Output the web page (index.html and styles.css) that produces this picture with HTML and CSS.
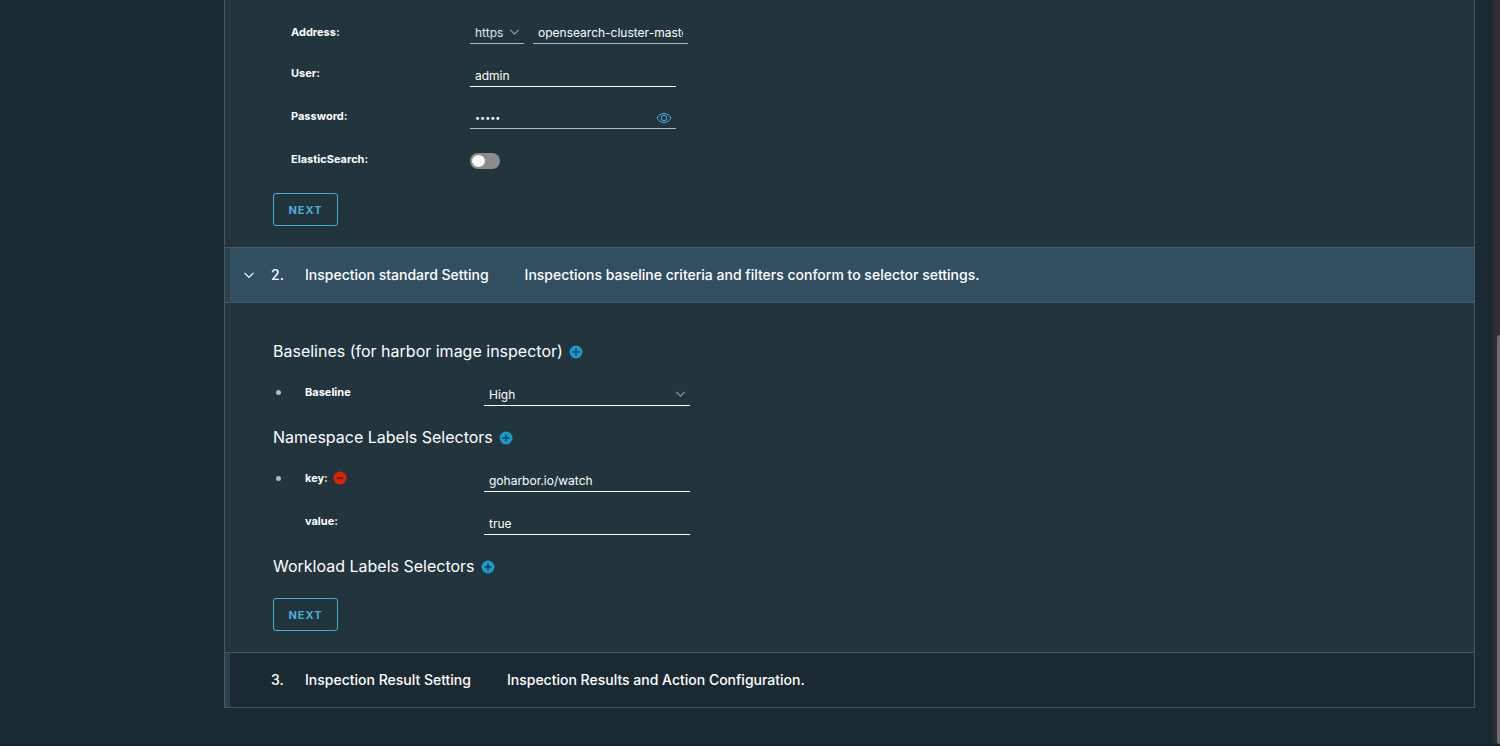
FILE: index.html
```html
<!DOCTYPE html>
<html lang="en">
<head>
<meta charset="utf-8">
<title>Inspection settings</title>
<link rel="stylesheet" href="styles.css">
</head>
<body>
<svg class="symbols" aria-hidden="true">
  <symbol id="chevron" viewBox="0 0 12 12"><path d="M1.5 3.8 6 8.3l4.500-4.500" fill="none" stroke="currentColor" stroke-width="1.200"/></symbol>
  <symbol id="plus" viewBox="0 0 14 14"><circle cx="7" cy="7" r="6.500" fill="#179bd3"/><path d="M7 3.800v6.400M3.800 7h6.400" stroke="#22343c" stroke-width="1.300" stroke-linecap="round"/></symbol>
  <symbol id="minus" viewBox="0 0 14 14"><circle cx="7" cy="7" r="6.500" fill="#e12200"/><path d="M4.200 7h5.600" stroke="#22343c" stroke-width="1.500" stroke-linecap="round"/></symbol>
  <symbol id="eye" viewBox="0 0 16 12"><path d="M1 6c1.600-2.900 4.100-4.500 7-4.500S13.400 3.100 15 6c-1.600 2.900-4.100 4.500-7 4.500S2.600 8.900 1 6z" fill="none" stroke="currentColor"/><circle cx="8" cy="6" r="2.800" fill="none" stroke="currentColor"/></symbol>
</svg>
<div class="page">
  <main class="content">
    <form class="accordion">
      <section class="panel panel-first">
        <div class="fields">
          <div class="row">
            <label class="label" for="host">Address:</label>
            <div class="control pair">
              <span class="select select-scheme"><select class="field muted" id="scheme" aria-label="Scheme"><option>https</option></select><svg class="chevron"><use href="#chevron"/></svg></span>
              <input class="field field-host muted" id="host" value="opensearch-cluster-master">
            </div>
          </div>
          <div class="row">
            <label class="label" for="user">User:</label>
            <div class="control lowered"><input class="field" id="user" value="admin"></div>
          </div>
          <div class="row row-tall">
            <label class="label" for="password">Password:</label>
            <div class="control password">
              <input class="field field-secret muted" id="password" type="password" value="admin">
              <button class="icon-button reveal" type="button" aria-label="Show password"><svg class="eye"><use href="#eye"/></svg></button>
            </div>
          </div>
          <div class="row row-tall">
            <label class="label" for="elastic">ElasticSearch:</label>
            <div class="control toggle-box"><input class="toggle" id="elastic" type="checkbox"></div>
          </div>
        </div>
        <button class="next" type="button">NEXT</button>
      </section>

      <button class="step step-open" type="button" aria-expanded="true">
        <svg class="step-arrow"><use href="#chevron"/></svg>
        <span class="step-number">2.</span>
        <span class="step-title">Inspection standard Setting</span>
        <span>Inspections baseline criteria and filters conform to selector settings.</span>
      </button>
      <section class="panel panel-second">
        <h3 class="heading">Baselines (for harbor image inspector) <button class="icon-button" type="button" aria-label="Add baseline"><svg class="badge"><use href="#plus"/></svg></button></h3>
        <ul class="items">
          <li class="item">
            <div class="row">
              <label class="label" for="baseline">Baseline</label>
              <div class="control lowered"><span class="select"><select class="field" id="baseline"><option>High</option></select><svg class="chevron"><use href="#chevron"/></svg></span></div>
            </div>
          </li>
        </ul>
        <h3 class="heading">Namespace Labels Selectors <button class="icon-button" type="button" aria-label="Add namespace label"><svg class="badge"><use href="#plus"/></svg></button></h3>
        <ul class="items">
          <li class="item">
            <div class="row">
              <div class="label-group"><label class="label" for="key">key:</label><button class="icon-button" type="button" aria-label="Remove label"><svg class="badge"><use href="#minus"/></svg></button></div>
              <div class="control lowered"><input class="field" id="key" value="goharbor.io/watch"></div>
            </div>
            <div class="row">
              <label class="label" for="value">value:</label>
              <div class="control lowered"><input class="field" id="value" value="true"></div>
            </div>
          </li>
        </ul>
        <h3 class="heading heading-last">Workload Labels Selectors <button class="icon-button" type="button" aria-label="Add workload label"><svg class="badge"><use href="#plus"/></svg></button></h3>
        <button class="next" type="button">NEXT</button>
      </section>

      <button class="step" type="button" aria-expanded="false">
        <span class="step-arrow"></span>
        <span class="step-number">3.</span>
        <span class="step-title">Inspection Result Setting</span>
        <span>Inspection Results and Action Configuration.</span>
      </button>
    </form>
  </main>
  <div class="scroll-track" aria-hidden="true"><div class="scroll-thumb"></div></div>
</div>
</body>
</html>
```
FILE: styles.css
```css
* { box-sizing: border-box; }

body {
  margin: 0;
  background: #1b2a32;
  color: #fff;
  font-family: Inter, "Liberation Sans", sans-serif;
  font-size: 12px;
}

button, input, select { font: inherit; color: inherit; }

.symbols { display: none; }

.page {
  display: flex;
  min-height: 100vh;
  border-bottom: 3px solid #18212c;
}

.content {
  flex: 1;
  padding: 0 18px 36px 224px;
}

.accordion {
  border: 1px solid #495865;
  border-top: 0;
}

.panel {
  background: #22343c;
  padding: 0 48px 21px;
}
.panel-first { padding-top: 20px; }
.panel-second { padding-top: 36px; }

.fields {
  display: grid;
  gap: 17px;
  padding: 0 0 20px 18px;
}

.row {
  display: grid;
  grid-template-columns: 179px 1fr;
  align-items: start;
}
.row-tall { min-height: 26px; }

.label {
  font-size: 11px;
  font-weight: 700;
  line-height: 24px;
}
.label-group { display: flex; align-items: center; gap: 5px; }

.control { width: 206px; }
.lowered { padding-top: 2px; }
.pair { display: flex; gap: 9px; width: 218px; }

.field {
  appearance: none;
  display: block;
  width: 100%;
  height: 24px;
  margin: 0;
  padding: 2px 5px 0;
  border: 0;
  border-bottom: 1px solid #fff;
  border-radius: 0;
  outline: 0;
  background: transparent;
}
.muted { border-color: #adbbc4; }
select.muted { color: #e3e8ea; }
.field-host {
  flex: 1;
  min-width: 0;
}
.field-secret { font-size: 9px; }

.select { display: block; position: relative; }
.select-scheme { width: 54px; }
.chevron {
  position: absolute;
  right: 4px;
  top: 6px;
  width: 11px;
  height: 12px;
  color: #93a1a9;
  pointer-events: none;
}

.password { position: relative; padding-top: 1px; }
.reveal { position: absolute; right: 4px; top: 8px; }
.eye { display: block; width: 16px; height: 12px; color: #49afd9; }

.toggle-box { padding-top: 6px; }
.toggle {
  appearance: none;
  display: block;
  width: 30px;
  height: 16px;
  margin: 0;
  padding: 2px;
  border-radius: 8px;
  background: #8c8c8c;
}
.toggle::before {
  content: "";
  display: block;
  width: 13px;
  height: 12px;
  border-radius: 50%;
  background: #fafafa;
}

.icon-button {
  display: block;
  padding: 0;
  border: 0;
  background: none;
}
.badge { display: block; width: 14px; height: 14px; }

.next {
  display: block;
  width: 65px;
  height: 33px;
  padding: 0;
  border: 1px solid #49afd9;
  border-radius: 3px;
  background: transparent;
  color: #49afd9;
  font-size: 11px;
  font-weight: 700;
  letter-spacing: 1px;
}

.step {
  display: flex;
  align-items: center;
  width: 100%;
  height: 55px;
  padding: 0 13px 2px;
  border: 0;
  border-top: 1px solid #495865;
  background: linear-gradient(to right, #29404d 5px, transparent 5px);
  font-size: 14px;
  font-weight: 500;
  text-align: left;
}
.step-open {
  height: 56px;
  border-bottom: 1px solid #495865;
  background: linear-gradient(to right, #2b4350 5px, #324f62 5px);
}
.step-arrow { width: 12px; height: 12px; margin: 2px 16px 0 5px; }
.step-number { width: 34px; }
.step-title { margin-right: 36px; }

.heading {
  display: flex;
  align-items: center;
  gap: 6px;
  margin: 0 0 17px;
  font-size: 16px;
  font-weight: 400;
  line-height: 24px;
}
.heading .badge { margin-top: 2px; }
.heading-last { margin-bottom: 20px; }

.items { list-style: none; margin: 0 0 19px; padding: 0; }
.item {
  position: relative;
  display: grid;
  gap: 17px;
  padding-left: 32px;
}
.item::before {
  content: "";
  position: absolute;
  left: 3px;
  top: 10px;
  width: 5px;
  height: 5px;
  border-radius: 50%;
  background: #adbbc4;
}

.scroll-track {
  display: flex;
  align-items: flex-end;
  justify-content: flex-end;
  width: 7px;
  background: #303030;
}
.scroll-thumb {
  width: 3px;
  height: 55%;
  border-radius: 3px 0 0 3px;
  background: #6f6f6f;
}
```
